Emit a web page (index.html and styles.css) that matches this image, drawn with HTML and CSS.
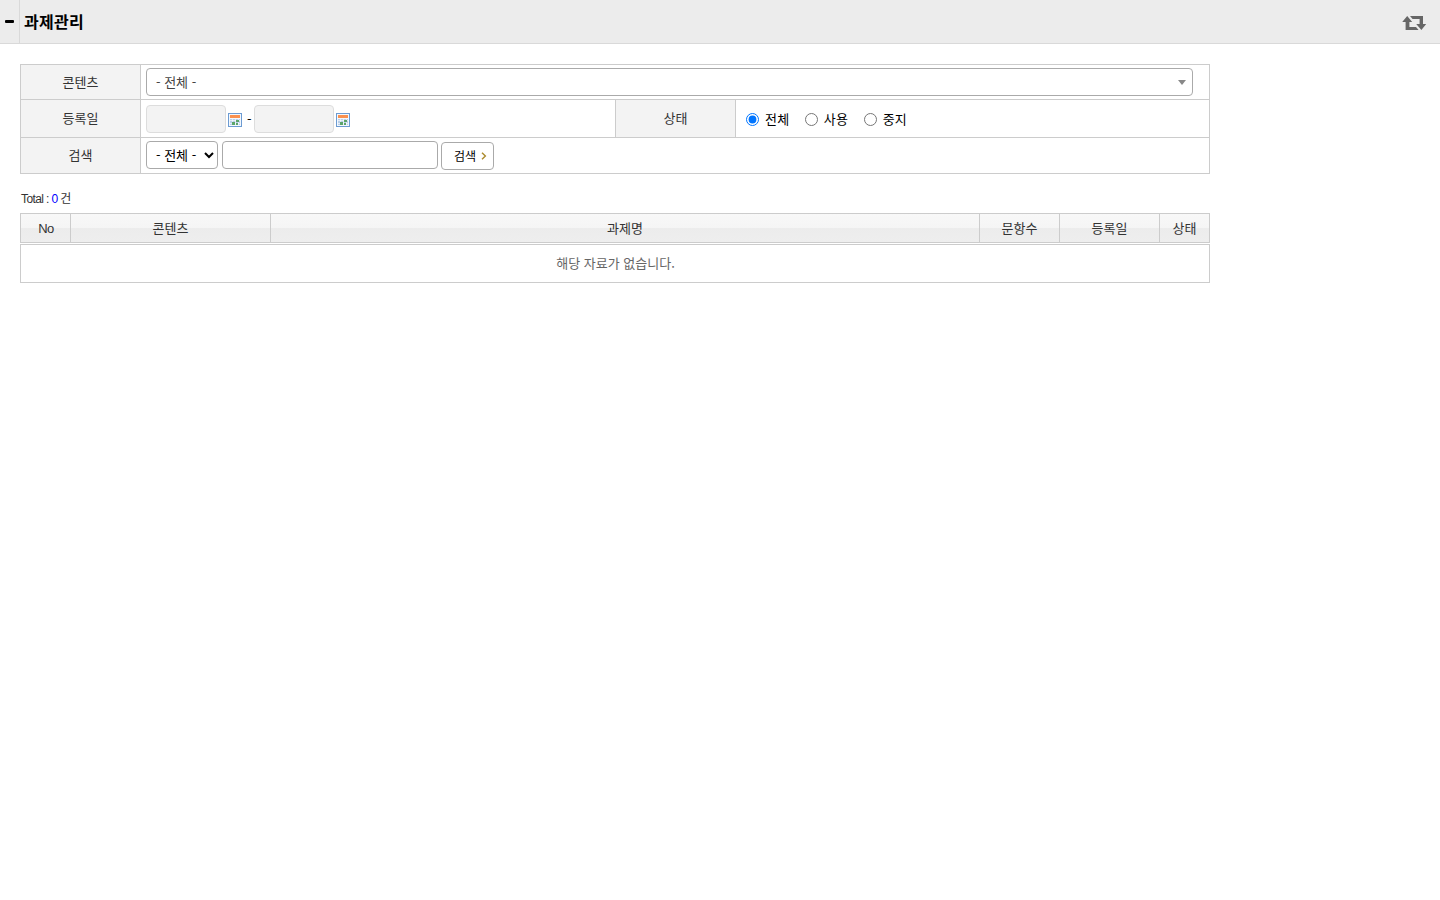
FILE: index.html
```html
<!DOCTYPE html>
<html lang="ko">

<head>
    <meta charset="UTF-8">
    <title>과제관리</title>
    <link rel="stylesheet" href="styles.css">
</head>

<body>
    <div class="page-header">
        <a class="menu-toggle" href="#"><span></span></a>
        <h1>과제관리</h1>
        <a class="reload" href="#">
            <svg width="24" height="15" viewBox="0 0 24 15">
                <path d="M5.2 0 L10.2 6 H7.4 V11 H14 L16.6 14 H3.6 V6 H0.2 Z M8 0 H21 V8 H24.2 L19.4 14 L14.2 8 H17.6 V3 H10.6 Z"/>
            </svg>
        </a>
    </div>

    <!-- 검색 영역 -->
    <form class="search-form">
        <table class="search-table">
            <colgroup>
                <col class="col-label">
                <col class="col-date">
                <col class="col-label">
                <col>
            </colgroup>
            <tr class="row-content">
                <th>콘텐츠</th>
                <td colspan="3">
                    <div class="content-select"><span>- 전체 -</span><i></i></div>
                </td>
            </tr>
            <tr class="row-date">
                <th>등록일</th>
                <td>
                    <div class="field-row">
                        <input type="text" class="date-input" readonly>
                        <svg class="calendar" width="14" height="14" viewBox="0 0 14 14">
                            <use href="#calendarIcon"/>
                        </svg>
                        <span class="dash">-</span>
                        <input type="text" class="date-input" readonly>
                        <svg class="calendar" width="14" height="14" viewBox="0 0 14 14">
                            <g id="calendarIcon">
                                <rect x="0.5" y="0.5" width="13" height="13" fill="#f3f8fe" stroke="#6c9bd2"/>
                                <path d="M2 2h10v3H2z" fill="#fa9150"/>
                                <path d="M2 6h10v6H2z" fill="#b9cfe8"/>
                                <path d="M4.5 6v6M7.5 6v6M10.5 6v6M2 7.5h10M2 10.5h10" stroke="#fff" stroke-width="0.6"/>
                                <path d="M8 7h3v2H8zM4 9h3v3H4zM8 10h2v2H8z" fill="#5ca56a"/>
                            </g>
                        </svg>
                    </div>
                </td>
                <th>상태</th>
                <td>
                    <div class="radio-row">
                        <label><input type="radio" name="status" checked><span>전체</span></label>
                        <label><input type="radio" name="status"><span>사용</span></label>
                        <label><input type="radio" name="status"><span>중지</span></label>
                    </div>
                </td>
            </tr>
            <tr class="row-search">
                <th>검색</th>
                <td colspan="3">
                    <div class="field-row">
                        <select class="search-type">
                            <option>- 전체 -</option>
                        </select>
                        <input type="text" class="search-text">
                        <button type="button" class="search-button"><span>검색</span>
                            <svg width="6" height="8" viewBox="0 0 6 8"><path d="M1 0.7 L4.4 4 L1 7.3"/></svg>
                        </button>
                    </div>
                </td>
            </tr>
        </table>
    </form>

    <p class="total">Total : <span>0</span> 건</p>

    <!-- 목록 -->
    <table class="list-table">
        <colgroup>
            <col class="col-no">
            <col class="col-content">
            <col>
            <col class="col-count">
            <col class="col-reg">
            <col class="col-status">
        </colgroup>
        <tr>
            <th class="no">No</th>
            <th>콘텐츠</th>
            <th>과제명</th>
            <th>문항수</th>
            <th>등록일</th>
            <th>상태</th>
        </tr>
    </table>
    <div class="list-empty">해당 자료가 없습니다.</div>
</body>

</html>
```
FILE: styles.css
```css
* {
    box-sizing: border-box;
}

body {
    margin: 0;
    background: #fff;
    color: #333;
    font-family: "Noto Sans CJK KR", sans-serif;
    font-size: 13px;
    line-height: 18px;
}

.page-header {
    display: flex;
    align-items: center;
    height: 44px;
    padding-right: 14px;
    background: #ececec;
    border-bottom: 1px solid #d9d9d9;
}

.menu-toggle {
    display: flex;
    align-items: center;
    width: 20px;
    height: 43px;
    padding-left: 5px;
    border-right: 1px solid #d9d9d9;
}

.menu-toggle span {
    width: 9px;
    height: 3px;
    border-radius: 1px;
    background: #000;
}

.page-header h1 {
    margin: 0 0 2px 4px;
    font-size: 16px;
    font-weight: bold;
    letter-spacing: 0.3px;
    color: #000;
}

.reload {
    display: flex;
    margin-left: auto;
    padding-top: 3px;
}

.reload svg {
    overflow: visible;
    fill: #666;
}

.search-form {
    margin: 20px 0 0 20px;
}

.search-table,
.list-table {
    width: 1190px;
    table-layout: fixed;
    border-collapse: separate;
    border-spacing: 0;
    border-top: 1px solid #ccc;
    border-left: 1px solid #ccc;
}

.search-table th,
.search-table td,
.list-table th {
    padding: 0;
    border-right: 1px solid #ccc;
    border-bottom: 1px solid #ccc;
    font-weight: 400;
}

.search-table th {
    background: #f3f3f3;
}

.search-table td {
    padding-left: 5px;
    color: #000;
}

.col-label {
    width: 120px;
}

.col-date {
    width: 475px;
}

.row-content {
    height: 35px;
}

.row-date {
    height: 38px;
}

.row-search {
    height: 36px;
}

.row-date th,
.row-search th {
    padding-bottom: 2px;
}

.content-select {
    display: flex;
    align-items: center;
    justify-content: space-between;
    width: 1047px;
    height: 28px;
    padding: 0 6px 0 9px;
    border: 1px solid #aaa;
    border-radius: 4px;
    color: #444;
}

.content-select i {
    border: 4px solid transparent;
    border-top: 5px solid #888;
    border-bottom: 0;
}

.field-row,
.radio-row {
    display: flex;
    align-items: center;
}

.row-search .field-row {
    align-items: flex-start;
    height: 29px;
}

input,
select,
button {
    margin: 0;
    font-family: inherit;
    font-size: 13px;
}

.date-input {
    width: 80px;
    height: 28px;
    border: 1px solid #ddd;
    border-radius: 4px;
    background: #f3f3f3;
}

.calendar {
    margin: 2px 0 0 2px;
}

.dash {
    width: 12px;
    padding-left: 5px;
}

.radio-row {
    padding: 2px 0 0 5px;
    gap: 15.5px;
}

.radio-row label {
    display: flex;
    align-items: center;
}

.radio-row span {
    margin-top: -2px;
    letter-spacing: 0.2px;
}

.radio-row input {
    width: 13px;
    height: 13px;
    margin-right: 6px;
}

.search-type {
    width: 72px;
    height: 28px;
    margin-right: 4px;
    padding: 0 0 1px 5px;
    border: 1px solid #aaa;
    border-radius: 4px;
    background: #fff;
    color: #000;
}

.search-text {
    width: 216px;
    height: 28px;
    margin-right: 3px;
    border: 1px solid #aaa;
    border-radius: 4px;
}

.search-button {
    display: flex;
    align-items: center;
    gap: 5px;
    width: 53px;
    height: 28px;
    margin-top: 1px;
    padding: 0 0 0 12px;
    border: 1px solid #aaa;
    border-radius: 4px;
    background: #fff;
    color: #000;
    font-size: 12px;
}

.search-button span {
    margin-top: -2px;
}

.search-button svg {
    fill: none;
    stroke: #ab8a2c;
    stroke-width: 1.4;
}

.total {
    margin: 16px 0 5px 21px;
    font-family: "Liberation Sans", "Noto Sans CJK KR", sans-serif;
    font-size: 12px;
    letter-spacing: -0.6px;
}

.total span {
    color: #00f;
}

.list-table {
    margin-left: 20px;
}

.list-table th {
    height: 29px;
    background: linear-gradient(#f8f8f8 0, #f5f5f5 50%, #ececec 50%, #eee 100%);
}

.list-table .no {
    padding: 2px 0 0 1px;
    font-family: "Liberation Sans", sans-serif;
    letter-spacing: -0.5px;
}

.col-no,
.col-status {
    width: 50px;
}

.col-content {
    width: 200px;
}

.col-count {
    width: 80px;
}

.col-reg {
    width: 100px;
}

.list-empty {
    width: 1190px;
    height: 39px;
    margin: 1px 0 0 20px;
    border: 1px solid #ccc;
    line-height: 36px;
    text-align: center;
    text-indent: 1px;
    color: #666;
}
```
